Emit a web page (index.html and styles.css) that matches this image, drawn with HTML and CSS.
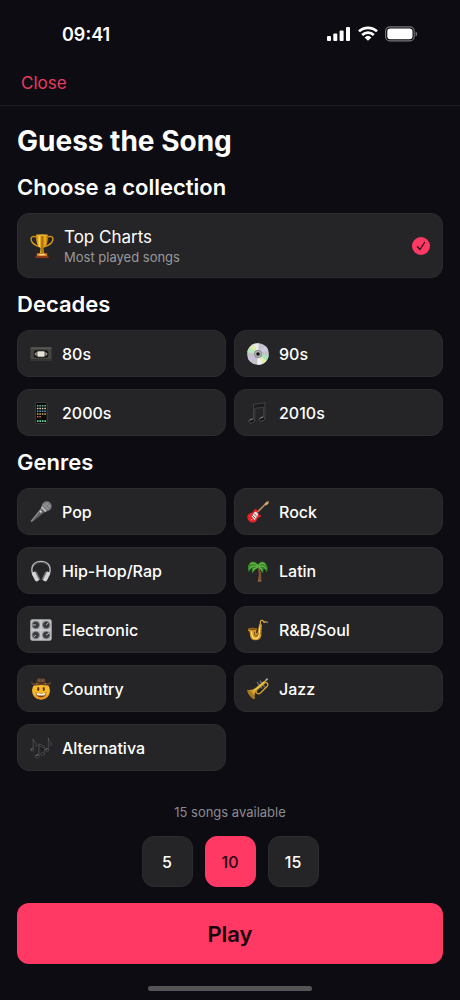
FILE: index.html
```html
<!DOCTYPE html>
<html lang="en">
<head>
  <meta charset="UTF-8">
  <meta name="viewport" content="width=device-width, initial-scale=1.0">
  <title>Guess the Song</title>
  <link rel="stylesheet" href="styles.css">
</head>
<body>

  <!-- Status Bar -->
  <div class="status-bar">
    <span class="time">09:41</span>
    <div class="status-icons">
      <svg width="24" height="16" viewBox="0 0 24 16" fill="#fff">
        <rect x="0" y="10" width="4" height="5" rx="1"/>
        <rect x="6.3" y="7.5" width="4" height="7.5" rx="1"/>
        <rect x="12.6" y="4.5" width="4" height="10.5" rx="1"/>
        <rect x="19" y="1" width="4" height="14" rx="1"/>
      </svg>
      <svg width="20" height="16" viewBox="0 0 20 16" fill="none" stroke="#fff" stroke-width="2.7">
        <path d="M1 5.4a13 13 0 0 1 18 0"/>
        <path d="M4.2 9a8.4 8.4 0 0 1 11.6 0"/>
        <path d="M10 14.8 6.6 11.4a5 5 0 0 1 6.8 0z" fill="#fff" stroke="none"/>
      </svg>
      <svg width="33" height="16" viewBox="0 0 33 16">
        <rect x=".6" y=".9" width="28.6" height="14" rx="4.4" fill="none" stroke="#77777b" stroke-width="1.1"/>
        <rect x="2.3" y="2.6" width="25.2" height="10.6" rx="3" fill="#fff"/>
        <path d="M30.6 5.6v4.6q1.6-.6 1.6-2.3t-1.6-2.3z" fill="#77777b"/>
      </svg>
    </div>
  </div>

  <!-- Toolbar -->
  <header class="toolbar">
    <button type="button" class="close">Close</button>
  </header>

  <main>
    <h1>Guess the Song</h1>

    <h2>Choose a collection</h2>
    <label class="card featured">
      <input type="radio" name="collection" value="top" checked>
      <svg class="icon" viewBox="0 0 24 24">
        <defs>
          <linearGradient id="gold" x1="0" x2="1">
            <stop offset="0" stop-color="#b06a00"/>
            <stop offset=".3" stop-color="#ffd84a"/>
            <stop offset=".5" stop-color="#a86500"/>
            <stop offset=".75" stop-color="#f6b61c"/>
            <stop offset="1" stop-color="#9c5a00"/>
          </linearGradient>
        </defs>
        <path d="M6.5 3.2C3 1.6.4 2.8 1.2 6c.7 3 4 5.4 8 6.6M17.5 3.2C21 1.6 23.6 2.8 22.8 6c-.7 3-4 5.4-8 6.6" fill="none" stroke="#d99a18" stroke-width="1.3"/>
        <path d="M5.8 1h12.4c.3 6.5-1.6 11-4.7 13.2l.6 5h-4.2l.6-5C7.4 12 5.5 7.500 5.800 1z" fill="url(#gold)"/>
        <ellipse cx="12" cy="1.2" rx="6.2" ry=".9" fill="#e9ad2a"/>
        <rect x="6.8" y="19.2" width="10.4" height="3" rx=".6" fill="#dd7a25"/>
        <rect x="9.2" y="19.8" width="5.6" height="1.5" fill="#ffe27a"/>
        <path d="M6 22h12l.8 1.9H5.200z" fill="#8c3a14"/>
      </svg>
      <span class="card-text">
        <span class="card-title">Top Charts</span>
        <span class="card-note">Most played songs</span>
      </span>
      <svg class="check" viewBox="0 0 18 18">
        <circle cx="9" cy="9" r="9" fill="#ff3864"/>
        <path d="M5.4 9.8 8 12.5l4.500-7" fill="none" stroke="#241318" stroke-width="1.3" stroke-linecap="round" stroke-linejoin="round"/>
      </svg>
    </label>

    <h2>Decades</h2>
    <div class="grid">
      <label class="card">
        <input type="radio" name="collection" value="80s">
        <svg class="icon" viewBox="0 0 24 24">
          <rect x=".5" y="4.500" width="23" height="15" rx="1" fill="#454543"/>
          <path d="M.5 5.500h23" stroke="#686761" stroke-width="1"/>
          <rect x="4" y="8" width="16" height="8" rx="2.500" fill="#171716"/>
          <path d="M4.700 12l2.500-2.500v5zM19.300 12l-2.500-2.500v5z" fill="#a5a399"/>
          <rect x="8" y="9" width="8" height="6" rx="1" fill="#e6e3d6"/>
          <path d="M1 18.500h22" stroke="#22211f"/>
        </svg>
        <span>80s</span>
      </label>
      <label class="card">
        <input type="radio" name="collection" value="90s">
        <svg class="icon" viewBox="0 0 24 24">
          <circle cx="12" cy="12" r="11.800" fill="#c3c4c8"/>
          <path d="M12 12 2.500 5A12 12 0 0 1 7 1.300z" fill="#dff0a6"/>
          <path d="M12 12 7 1.300A12 12 0 0 1 13 .2z" fill="#e9e9ef"/>
          <path d="M12 12 .3 10A12 12 0 0 1 2.500 5z" fill="#b9e8c5"/>
          <path d="M12 12 20 3.300A12 12 0 0 1 23 7.500z" fill="#d4c7e8"/>
          <path d="M12 12 21.500 19A12 12 0 0 1 17 22.700z" fill="#e4efa2"/>
          <path d="M12 12 23.700 14A12 12 0 0 1 21.500 19z" fill="#a9e2c2"/>
          <path d="M12 12 4 20.700A12 12 0 0 1 1 16.500z" fill="#cdbfe4"/>
          <path d="M12 12 17 22.700a12 12 0 0 1-6 1z" fill="#efeff4"/>
          <circle cx="12" cy="12" r="4.400" fill="#8b8c90"/>
          <circle cx="12" cy="12" r="3.200" fill="#b4b5b8"/>
          <circle cx="12" cy="12" r="1.900" fill="#111113"/>
        </svg>
        <span>90s</span>
      </label>
      <label class="card">
        <input type="radio" name="collection" value="2000s">
        <svg class="icon" viewBox="0 0 24 24">
          <rect x="5.800" y=".5" width="12.800" height="23" rx="1.600" fill="#09090a" stroke="#4b4b4d" stroke-width=".8"/>
          <g stroke-width="1.700" fill="none" stroke-dasharray="1.700 1">
            <path d="M7.500 4h10" stroke="#6bbd8f"/>
            <path d="M7.500 7h10" stroke="#d8d2c4"/>
            <path d="M7.500 10h10" stroke="#5d9bb2"/>
            <path d="M7.500 13h10" stroke="#d3aa65"/>
            <path d="M7.500 16h5" stroke="#cf6651"/>
          </g>
          <path d="M7.500 20.800h10" stroke="#68dba0" stroke-width="1.900" stroke-dasharray="1.800 .9"/>
        </svg>
        <span>2000s</span>
      </label>
      <label class="card">
        <input type="radio" name="collection" value="2010s">
        <svg class="icon" viewBox="0 0 24 24">
          <path d="M7.200 2.600 19.500.8v16.400h-1.300V5.700L8.500 7v12.600H7.200z" fill="#1c1c1e" stroke="#5d5d60" stroke-width=".6"/>
          <ellipse cx="5" cy="20.600" rx="3.300" ry="2.300" transform="rotate(-18 5 20.600)" fill="#111113" stroke="#6a6a6d" stroke-width=".6"/>
          <ellipse cx="16.500" cy="18.400" rx="3.300" ry="2.300" transform="rotate(-18 16.500 18.400)" fill="#111113" stroke="#6a6a6d" stroke-width=".6"/>
          <path d="M3 20.400q1.200-1.500 3-1.300M14.500 18.200q1.200-1.500 3-1.300" stroke="#b5b5b7" stroke-width=".8" fill="none"/>
        </svg>
        <span>2010s</span>
      </label>
    </div>

    <h2>Genres</h2>
    <div class="grid">
      <label class="card">
        <input type="radio" name="collection" value="pop">
        <svg class="icon" viewBox="0 0 24 24">
          <path d="M12.500 7 17 11.500 2.500 22.800.8 23.200l.1-1.600z" fill="#5f5f61"/>
          <path d="M13 8 1.500 22" stroke="#919193" stroke-width="1.200"/>
          <circle cx="18.200" cy="5.800" r="5.400" fill="#77777a"/>
          <path d="M12.500 6.500 17.500 11.500" stroke="#bdbdc0" stroke-width="1.900"/>
          <path d="M14.600 3.300 20.800 9.500M17 1.500l5.500 5.600M14.500 7 20 1.200M17.600 9 22.600 4" stroke="#a7a7aa" stroke-width=".8"/>
          <circle cx="11.700" cy="11.600" r="1.100" fill="#e0e0e2"/>
        </svg>
        <span>Pop</span>
      </label>
      <label class="card">
        <input type="radio" name="collection" value="rock">
        <svg class="icon" viewBox="0 0 24 24">
          <path d="M11 12.500 20.500 3" stroke="#b48863" stroke-width="1.900"/>
          <path d="M19 3.500 21 .8l2.800-.4-.5 2.700L20.800 5z" fill="#d3a679"/>
          <path d="M10.500 9.200C8 8.500 7.600 9.800 6.800 11.700 6 13.200.8 13 .4 16.800c-.4 4 3.800 7.200 7.400 6.600 3.400-.5 3-4.300 4.600-5.300 1.700-.7 3.400-.8 3-2.900-1.300.9-2.600.3-2.600-.7z" fill="#e8242b"/>
          <path d="M7.700 12.500 5 16.700l3.300 4.300 3-4.300 1-2.500-2.500-2.500z" fill="#eee4df"/>
          <path d="M5.500 15.500 9.200 19M7.300 13.500l3.600 3.600" stroke="#6a4142" stroke-width="1"/>
          <circle cx="5" cy="20.300" r=".8" fill="#ffb9b5"/>
        </svg>
        <span>Rock</span>
      </label>
      <label class="card">
        <input type="radio" name="collection" value="hiphop">
        <svg class="icon" viewBox="0 0 24 24">
          <path d="M3.200 16.500C-.2 7 4.500 1.500 12 1.500s12.200 5.500 8.800 15" fill="none" stroke="#b6b6ba" stroke-width="1.600"/>
          <path d="M5 5.500Q7.500 2.600 12 2.600t7 2.900" fill="none" stroke="#6f6f73" stroke-width=".8"/>
          <rect x="3.600" y="12.500" width="5" height="11" rx="2.400" transform="rotate(-26 6.100 18)" fill="#d4d4d8"/>
          <rect x="15.400" y="12.500" width="5" height="11" rx="2.400" transform="rotate(26 17.900 18)" fill="#d4d4d8"/>
          <path d="M6.700 13.500 10.400 21M17.300 13.500 13.600 21" stroke="#737377" stroke-width="1.800" stroke-linecap="round"/>
        </svg>
        <span>Hip-Hop/Rap</span>
      </label>
      <label class="card">
        <input type="radio" name="collection" value="latin">
        <svg class="icon" viewBox="0 0 24 24">
          <path d="M12.300 9q1.500 7-.6 14.700h4Q16 15 14 8.500z" fill="#8f6038"/>
          <path d="M12.800 12.500h2M13 15h2.300M12.700 17.500h2.800M12.400 20h3.200" stroke="#5b381d" stroke-width=".8"/>
          <path d="M12 5C9.500.8 4 .6 2.600 4.200.6 5.500.4 9.500 2 13.200 3 11 4 9.500 5.600 9c-.8 2-.6 4.200.4 5.800C7 12 9 10 12.300 8.800c2.700 1.300 3.700 3.300 4 6 1.600-1.500 2-3.700 1.500-5.600 2 .8 3 2.200 3.800 4.300 1.500-3.700 1-7.700-1-9C19 .7 14.500.8 12 5z" fill="#36872c"/>
          <path d="M12 6.500Q7 1.500 3.500 4.800M12 7.500Q5 5 2.700 9.500M11.800 8.200Q8 8.500 6.500 11.500M12.500 7.500q6-2.500 8.300 2M12.500 6.300Q16 1.500 20 5M13 8q3 1 3.500 3.700" fill="none" stroke="#75bd49" stroke-width="1.100"/>
        </svg>
        <span>Latin</span>
      </label>
      <label class="card">
        <input type="radio" name="collection" value="electronic">
        <svg class="icon" viewBox="0 0 24 24">
          <rect x=".3" y=".3" width="23.400" height="23.400" rx="2.400" fill="#b8babd"/>
          <path d="M12 1v22M1 12h22" stroke="#d4d6d8" stroke-width="1"/>
          <g fill="#3a3b3e" stroke="#85878a" stroke-width=".8">
            <circle cx="6.300" cy="6.500" r="4"/>
            <circle cx="17.700" cy="6.500" r="4"/>
            <circle cx="6.300" cy="17.500" r="4"/>
            <circle cx="17.700" cy="17.500" r="4"/>
          </g>
          <path d="M6.300 6.500H2.800M17.700 6.500l2.500-2.500M6.300 17.500 3.800 20M17.700 17.500l3-2" stroke="#d9d9dc" stroke-width="1"/>
        </svg>
        <span>Electronic</span>
      </label>
      <label class="card">
        <input type="radio" name="collection" value="rnb">
        <svg class="icon" viewBox="0 0 24 24">
          <path d="M14.500 8V4q0-2.800 2.500-2.600l1.800 2.300 2.200-1.200" fill="none" stroke="#dca636" stroke-width="1.300"/>
          <path d="m20 3 3 .9" stroke="#77787b" stroke-width="1.600"/>
          <path d="M.7 11.800Q2 9.600 5.500 9.500t5.800 1.300q-1.600 1.500-1.300 4.200.8 1.400 1.500-.5L13.300 5.500l3 .4-.7 12.500q-.8 4.700-6 4.900-6.200.2-6.300-5.800 0-4-2.600-5.700z" fill="#d49727"/>
          <ellipse cx="6" cy="11" rx="4.800" ry="1.200" fill="#8a5917"/>
          <path d="M5 13.500q-.2 7 3.800 7.800 3.700.2 4.300-4.300l1.200-9" fill="none" stroke="#ffe27d" stroke-width="1.300"/>
          <path d="M8 14q0 4.500 2 4.500t2.500-3.500" fill="none" stroke="#8d5b16" stroke-width="1.100"/>
          <path d="M14.700 9.500h1.900M14.500 12.500h1.900M14.200 15.500h1.900" stroke="#76501b" stroke-width="1"/>
        </svg>
        <span>R&amp;B/Soul</span>
      </label>
      <label class="card">
        <input type="radio" name="collection" value="country">
        <svg class="icon" viewBox="0 0 24 24">
          <circle cx="12" cy="13.700" r="9.800" fill="#fbb928"/>
          <path d="M2.700 16.700a9.800 9.800 0 0 0 18.600 0Q12 25 2.700 16.700z" fill="#ee9420"/>
          <path d="M.8 3.500Q3 6.500 12 6.500t11.200-3Q22.500 8.500 18.500 8.300 12 7 5.500 8.300 1.500 8.500.8 3.500z" fill="#5f4230"/>
          <path d="M7 5.800Q7.200.3 9.500.3q1.300 0 2.500.6 1.200-.6 2.500-.6 2.300 0 2.500 5.500-5 1.400-10 0z" fill="#67452f"/>
          <path d="M7 5q5 1.400 10 0" fill="none" stroke="#32231b" stroke-width="1.100"/>
          <path d="M10 1.700v2.300M14 1.700v2.300" stroke="#9b7557" stroke-width=".8"/>
          <ellipse cx="9" cy="12" rx="1.200" ry="2.100" fill="#60320d"/>
          <ellipse cx="15" cy="12" rx="1.200" ry="2.100" fill="#60320d"/>
          <path d="M6 15.800q6 1.300 12 0-.8 5.200-6 5.200t-6-5.200z" fill="#78400f"/>
          <path d="M6.800 16.300q5.200 1 10.400 0-.3 1.700-1.200 2.400-4 .7-8 0-1-.8-1.200-2.400z" fill="#fff6dc"/>
        </svg>
        <span>Country</span>
      </label>
      <label class="card">
        <input type="radio" name="collection" value="jazz">
        <svg class="icon" viewBox="0 0 24 24">
          <path d="m11 4.500 5.500 7M14 3l5.500 7" stroke="#68686b" stroke-width="1.700"/>
          <path d="m9.500 14 9-8.500q2-1.500 3.500 0t0 3.500l-7 7q-3 2.500-4.700 0-1-1.700.7-3.500l8.500-7" fill="none" stroke="#d8a82b" stroke-width="1.400"/>
          <path d="M.5 12.800Q5.500 14.500 12 8.500L20.500 2l.8 1L13 10.500Q7.500 16 8.200 23.200z" fill="#c99a25"/>
          <ellipse cx="4.400" cy="18" rx="2" ry="6.300" transform="rotate(-37 4.400 18)" fill="#a87920"/>
          <path d="M7 14.500 19 4" stroke="#fbe07a" stroke-width="1"/>
          <path d="m20.500 2.700 2-2" stroke="#b8b8bb" stroke-width="1.600"/>
        </svg>
        <span>Jazz</span>
      </label>
      <label class="card">
        <input type="radio" name="collection" value="alternativa">
        <svg class="icon" viewBox="0 0 24 24">
          <g fill="#17171a" stroke="#606064" stroke-width=".7">
            <path d="M3.500 2v11.500M3.500 2q0 2.500 2.500 4t.5 4.500" fill="none"/>
            <ellipse cx="2.500" cy="14" rx="2" ry="1.400"/>
            <path d="M9.700 7.500 15.500 10v9M9.700 7.500v12.800M9.700 9.500l5.800 2.500"/>
            <ellipse cx="8" cy="21" rx="2.400" ry="1.800"/>
            <ellipse cx="13.700" cy="18.500" rx="2" ry="1.500"/>
            <path d="M20 1v12.500M20 1q0 2.500 2 4.200t.3 5" fill="none"/>
            <ellipse cx="18.500" cy="14" rx="2" ry="1.500"/>
          </g>
          <path d="M7 20.500q.7-.8 1.800-.7M1.500 13.700l1.300-.5M17.500 13.600l1.400-.6" stroke="#a7a7aa" stroke-width=".9" fill="none"/>
        </svg>
        <span>Alternativa</span>
      </label>
    </div>
  </main>

  <!-- Song count and Play -->
  <footer>
    <p class="available">15 songs available</p>
    <div class="counts">
      <label class="count"><input type="radio" name="count" value="5"><span>5</span></label>
      <label class="count"><input type="radio" name="count" value="10" checked><span>10</span></label>
      <label class="count"><input type="radio" name="count" value="15"><span>15</span></label>
    </div>
    <button type="button" class="play">Play</button>
    <div class="home-indicator"></div>
  </footer>

</body>
</html>
```

FILE: styles.css
```css
* {
  margin: 0;
  padding: 0;
  box-sizing: border-box;
}
body {
  min-height: 100vh;
  display: flex;
  flex-direction: column;
  background: #0d0c12;
  color: #fff;
  font-family: Inter, "Liberation Sans", sans-serif;
}
button {
  border: none;
  background: none;
  font-family: inherit;
  cursor: pointer;
}

/* Status Bar */
.status-bar {
  display: flex;
  justify-content: space-between;
  align-items: center;
  height: 60px;
  padding: 8px 42px 0 62px;
}
.time {
  font-size: 18px;
  font-weight: 600;
}
.status-icons {
  display: flex;
  align-items: center;
  gap: 7px;
}

/* Toolbar */
.toolbar {
  display: flex;
  align-items: center;
  height: 46px;
  padding: 0 21px;
  border-bottom: 1px solid #1b1a20;
}
.close {
  color: #e83a60;
  font-size: 17px;
}

main {
  padding: 15px 17px 24px;
}
h1 {
  font-size: 28px;
  line-height: 40px;
}
h2 {
  margin: 10px 0;
  font-size: 22px;
  font-weight: 600;
  line-height: 32px;
}

/* Collection cards */
.grid {
  display: grid;
  grid-template-columns: 1fr 1fr;
  gap: 12px 8px;
}
.card {
  position: relative;
  display: flex;
  align-items: center;
  gap: 10px;
  height: 47px;
  padding: 0 12px;
  border: 1px solid #2c2c2e;
  border-radius: 12px;
  background: #252527;
  font-size: 16px;
  font-weight: 500;
  line-height: 20px;
  cursor: pointer;
}
.card input,
.count input {
  position: absolute;
  inset: 0;
  width: 100%;
  height: 100%;
  opacity: 0;
  cursor: pointer;
}
.icon {
  width: 22px;
  height: 22px;
}
.featured {
  height: 65px;
}
.featured .icon {
  width: 24px;
  height: 24px;
}
.card-text {
  display: flex;
  flex-direction: column;
  flex: 1;
  font-weight: 400;
}
.card-title {
  font-size: 17px;
  line-height: 22px;
}
.card-note {
  color: #98989b;
  font-size: 13px;
  line-height: 18px;
}
.check {
  width: 18px;
  height: 18px;
}

/* Footer */
footer {
  display: flex;
  flex-direction: column;
  align-items: center;
  gap: 16px;
  margin-top: auto;
  padding: 0 17px 9px;
}
.available {
  color: #8b8b8f;
  font-size: 13px;
  line-height: 16px;
}
.counts {
  display: flex;
  gap: 12px;
}
.count {
  position: relative;
  width: 51px;
  height: 51px;
}
.count span {
  display: flex;
  align-items: center;
  justify-content: center;
  height: 100%;
  border: 1px solid #2c2c2e;
  border-radius: 12px;
  background: #252527;
  font-size: 16px;
  font-weight: 500;
  line-height: 20px;
}
.count input:checked + span {
  border-color: #ff3864;
  background: #ff3864;
  color: #260810;
}
.play {
  width: 100%;
  height: 61px;
  border-radius: 12px;
  background: #ff3864;
  color: #16060b;
  font-size: 22px;
  font-weight: 600;
}
.home-indicator {
  width: 164px;
  height: 5px;
  margin-top: 6px;
  border-radius: 3px;
  background: #555557;
}
```
